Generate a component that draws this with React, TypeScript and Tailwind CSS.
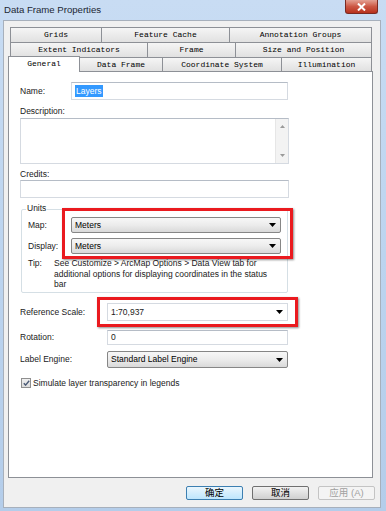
import type { ReactNode } from "react"

const SANS = "font-['Liberation_Sans',Arial,sans-serif]"
const MONO = "font-['Liberation_Mono','Courier_New',monospace]"
const CJK = "font-['Liberation_Sans','Noto_Sans_CJK_SC',sans-serif]"

// ─── small pieces ─────────────────────────────────────────────────────────────

function Arrow() {
  return (
    <svg width="7" height="4" viewBox="0 0 7 4" className="shrink-0">
      <path d="M0 0h7L3.5 4z" fill="#000" />
    </svg>
  )
}

function Tab({ label, w, first }: { label: string; w: string; first?: boolean }) {
  return (
    <div
      className={`${w} h-full flex items-center justify-center border-t border-r border-[#8d9096] bg-gradient-to-b from-[#f5f5f5] to-[#e1e1e1] ${first ? "border-l" : ""}`}
    >
      <span className={`${MONO} text-[8px] leading-none text-black whitespace-pre`}>{label}</span>
    </div>
  )
}

function DropList({ value, w }: { value: string; w: string }) {
  return (
    <div
      className={`${w} h-full flex items-center justify-between pl-[3px] pr-[4px] rounded-[2px] border border-[#868686] bg-gradient-to-b from-[#f7f7f7] via-[#ececec] to-[#d9d9d9]`}
    >
      <span className="text-[8.5px] leading-none text-black">{value}</span>
      <Arrow />
    </div>
  )
}

function TextBox({ w, h, children }: { w: string; h: string; children?: ReactNode }) {
  return (
    <div
      className={`${w} ${h} flex items-center pl-[3px] bg-white border border-[#d5dae1] border-t-[#b5bcc6]`}
    >
      {children}
    </div>
  )
}

function Row({ label, lw, h, children }: { label: string; lw: string; h: string; children: ReactNode }) {
  return (
    <div className={`flex items-center ${h}`}>
      <span className={`${lw} shrink-0 text-[8.5px] leading-none text-[#1a1a1a]`}>{label}</span>
      {children}
    </div>
  )
}

function RedBox({ className }: { className: string }) {
  return (
    <div
      className={`absolute border-[3px] border-[#ea1a1f] shadow-[1px_1px_2px_rgba(0,0,0,0.45)] pointer-events-none ${className}`}
    />
  )
}

function Button({ label, primary, disabled }: { label: string; primary?: boolean; disabled?: boolean }) {
  return (
    <div
      className={`w-[57px] h-[14px] flex items-center justify-center rounded-[2px] border bg-gradient-to-b
        ${primary ? "border-[#3c7fb1] from-[#eaf6fd] to-[#bee6fd]" : ""}
        ${disabled ? "border-[#c4c4c4] from-[#f4f4f4] to-[#f4f4f4]" : ""}
        ${!primary && !disabled ? "border-[#707070] from-[#f2f2f2] to-[#d0d0d0]" : ""}`}
    >
      <span className={`${CJK} text-[9.5px] leading-none whitespace-pre ${disabled ? "text-[#a0a0a0]" : "text-black"}`}>{label}</span>
    </div>
  )
}

// ─── dialog ──────────────────────────────────────────────────────────────────

export default function App() {
  return (
    <div className={`${SANS} w-[386px] h-[511px] flex flex-col bg-gradient-to-b from-[#c8dcf3] via-[#bcd4ef] to-[#b4cdea] overflow-hidden`}>
      {/* Title bar */}
      <div className="h-[20px] flex items-start justify-between">
        <span className="pl-[4px] pt-[4px] text-[9.6px] leading-[12px] text-[#1c2733]">Data Frame Properties</span>
        <div className="mr-[8px] w-[33px] h-[14px] flex items-center justify-center rounded-b-[3px] border border-t-0 border-[#7a2a22] bg-gradient-to-b from-[#e3a093] via-[#cc5744] to-[#b7301c]">
          <svg width="9" height="8" viewBox="0 0 9 8">
            <path d="M1 0.5l7 7M8 0.5l-7 7" stroke="#fff" strokeWidth="2" />
          </svg>
        </div>
      </div>

      {/* Client area */}
      <div className="ml-[3px] w-[378px] h-[488px] bg-[#f0f0f0] border border-[#a7b0bc] pt-[6px] pl-[4px]">
        {/* Tab rows */}
        <div className="ml-[2px] w-[362px] h-[15px] flex">
          <Tab label="Grids" w="w-[92px]" first />
          <Tab label="Feature Cache" w="w-[128px]" />
          <Tab label="Annotation Groups" w="w-[142px]" />
        </div>
        <div className="ml-[2px] w-[362px] h-[15px] flex">
          <Tab label="Extent Indicators" w="w-[138px]" first />
          <Tab label="Frame" w="w-[88px]" />
          <Tab label="Size and Position" w="w-[136px]" />
        </div>
        <div className="w-[365px] h-[14px] flex items-end">
          <div className="relative z-10 w-[72px] h-[16px] -mb-px flex items-start justify-center pt-[3px] bg-white border-l border-t border-r border-[#8d9096]">
            <span className={`${MONO} text-[8px] leading-none text-black`}>General</span>
          </div>
          <Tab label="Data Frame" w="w-[83px]" />
          <Tab label="Coordinate System" w="w-[119px]" />
          <Tab label="Illumination" w="w-[90px]" />
        </div>

        {/* Panel */}
        <div className="w-[365px] h-[407px] bg-white border border-[#8d9096] pt-[10px] pl-[11px] text-[8.5px] leading-none text-[#1a1a1a]">
          <Row label="Name:" lw="w-[51px]" h="h-[18px]">
            <TextBox w="w-[217px]" h="h-[18px]">
              <span className="px-[1px] py-[2px] bg-[#3399ff] text-white text-[8.5px] leading-none">Layers</span>
            </TextBox>
          </Row>

          <div className="mt-[5px] h-[12px] leading-[12px]">Description:</div>
          <div className="mt-[1px] w-[269px] h-[46px] flex bg-white border border-[#d5dae1] border-t-[#b5bcc6]">
            <div className="flex-1" />
            <div className="w-[13px] h-full flex flex-col items-center justify-between py-[6px] bg-[#f3f3f3] border-l border-[#e6e6e6]">
              <svg width="5" height="3" viewBox="0 0 5 3"><path d="M0 3h5L2.5 0z" fill="#9a9a9a" /></svg>
              <svg width="5" height="3" viewBox="0 0 5 3"><path d="M0 0h5L2.5 3z" fill="#9a9a9a" /></svg>
            </div>
          </div>

          <div className="mt-[4px] h-[12px] leading-[12px]">Credits:</div>
          <TextBox w="w-[269px]" h="h-[18px]" />

          {/* Units group */}
          <div className="relative mt-[11px] ml-[1px] w-[267px] h-[84px] rounded-[2px] border border-[#d5dfe5] pt-[7px] pl-[6px]">
            <span className="absolute left-[4px] -top-[8px] px-[1px] bg-white leading-[12px]">Units</span>
            <div className="relative">
              <Row label="Map:" lw="w-[43px]" h="h-[16px]">
                <DropList value="Meters" w="w-[210px]" />
              </Row>
              <div className="mt-[5px]">
                <Row label="Display:" lw="w-[43px]" h="h-[16px]">
                  <DropList value="Meters" w="w-[210px]" />
                </Row>
              </div>
              <RedBox className="left-[34px] -top-[9px] w-[231px] h-[51px]" />
            </div>
            <div className="mt-[4px] flex leading-[10.5px]">
              <span className="w-[26px] shrink-0">Tip:</span>
              <span>
                See Customize &gt; ArcMap Options &gt; Data View tab for
                <br />
                additional options for displaying coordinates in the status
                <br />
                bar
              </span>
            </div>
          </div>

          {/* Reference scale */}
          <div className="relative mt-[10px]">
            <Row label="Reference Scale:" lw="w-[87px]" h="h-[18px]">
              <div className="w-[181px] h-full flex items-center justify-between pl-[3px] pr-[4px] bg-white border border-[#d5dae1]">
                <span>1:70,937</span>
                <Arrow />
              </div>
            </Row>
            <RedBox className="left-[77px] -top-[6px] w-[201px] h-[30px]" />
          </div>

          <div className="mt-[9px]">
            <Row label="Rotation:" lw="w-[87px]" h="h-[15px]">
              <TextBox w="w-[181px]" h="h-[15px]">
                <span>0</span>
              </TextBox>
            </Row>
          </div>

          <div className="mt-[6px]">
            <Row label="Label Engine:" lw="w-[87px]" h="h-[17px]">
              <DropList value="Standard Label Engine" w="w-[181px]" />
            </Row>
          </div>

          <div className="mt-[10px] ml-[1px] h-[10px] flex items-center">
            <div className="w-[10px] h-[10px] flex items-center justify-center border border-[#8f8f8f] bg-gradient-to-b from-[#f0f0f0] to-[#dcdcdc]">
              <svg width="7" height="6" viewBox="0 0 7 6">
                <path d="M0.8 3.2l1.8 1.9L6.2 0.8" stroke="#4a5a76" strokeWidth="1.4" fill="none" />
              </svg>
            </div>
            <span className="ml-[2px]">Simulate layer transparency in legends</span>
          </div>
        </div>

        {/* Buttons */}
        <div className="mt-[8px] pr-[5px] flex justify-end gap-[9px]">
          <Button label="确定" primary />
          <Button label="取消" />
          <Button label="应用 (A)" disabled />
        </div>
      </div>
    </div>
  )
}
